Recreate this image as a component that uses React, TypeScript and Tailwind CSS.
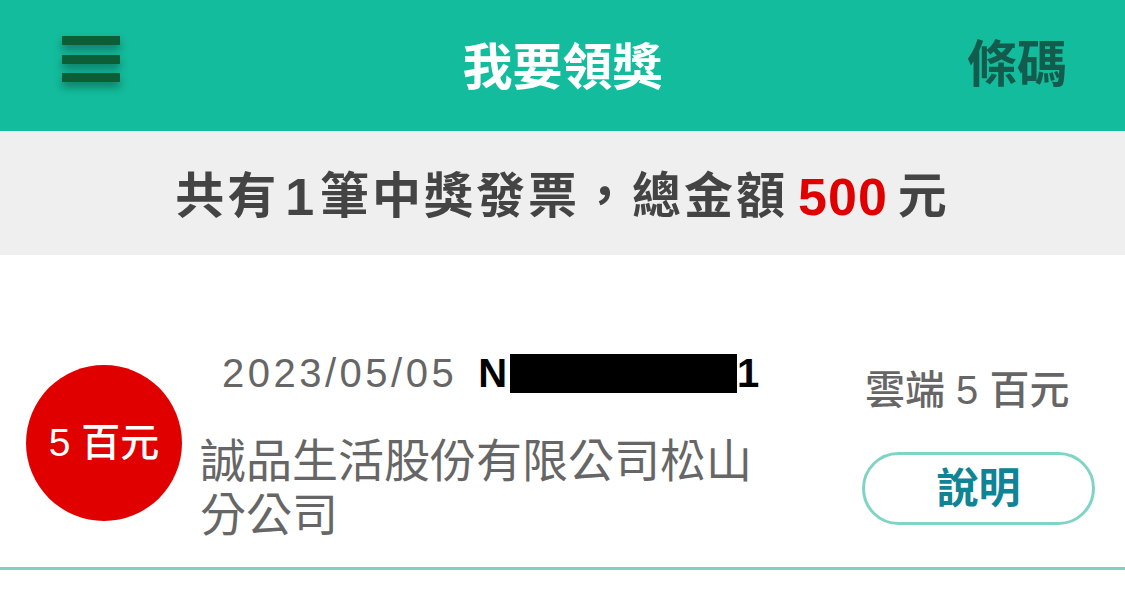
import React from "react";

const FONT = { fontFamily: '"Liberation Sans", "Noto Sans CJK TC", sans-serif' };

function MenuIcon() {
  return (
    <div className="self-start mt-[36px] flex flex-col gap-[9.5px] w-[58px] [filter:drop-shadow(0_5px_4px_rgba(0,0,0,0.35))]">
      <div className="h-[9px] bg-[#0b5e36]" />
      <div className="h-[9px] bg-[#0b5e36]" />
      <div className="h-[9px] bg-[#0b5e36]" />
    </div>
  );
}

function Header() {
  return (
    <header className="h-[131px] bg-[#13bc9c] flex items-center justify-between pl-[62px] pr-[58px] relative">
      <MenuIcon />
      <div className="absolute left-1/2 -translate-x-1/2 top-0 h-full pt-[6px] flex items-center text-white text-[50px] font-bold">
        我要領獎
      </div>
      <div className="text-[50px] font-bold text-[#135c4d]">條碼</div>
    </header>
  );
}

function Summary() {
  return (
    <div className="h-[124px] pt-[8px] bg-[#efefef] flex items-center justify-center text-[49px] font-bold text-[#444444] tracking-[3px]">
      <span>共有</span>
      <span className="mx-[6px] text-[52px] tracking-normal">1</span>
      <span>筆中獎發票，總金額</span>
      <span className="text-[#e00000] text-[52px] tracking-[1px] mx-[10px]">500</span>
      <span>元</span>
    </div>
  );
}

function PrizeRow() {
  return (
    <div className="h-[315px] flex items-start border-b-[3px] border-[#7fd0c4]">
      <div className="ml-[26px] mt-[110px] w-[156px] h-[156px] rounded-full bg-[#e00000] flex items-center justify-center text-white text-[39px] font-medium">
        5 百元
      </div>

      <div className="ml-[18px] mt-[94px] flex flex-col">
        <div className="ml-[22px] h-[48px] flex items-center text-[40px] tracking-[3.5px]">
          <span className="text-[#666666]">2023/05/05</span>
          <span className="ml-[21px] font-bold text-black tracking-normal">N</span>
          <span className="ml-[3px] w-[227px] h-[39px] bg-black" />
          <span className="font-bold text-black tracking-normal">1</span>
        </div>
        <div className="mt-[37px] w-[562px] text-[46px] leading-[54px] text-[#666666]">
          誠品生活股份有限公司松山分公司
        </div>
      </div>

      <div className="ml-auto mr-[30px] mt-[112px] flex flex-col items-start w-[233px]">
        <div className="ml-[3px] h-[46px] flex items-center text-[40px] font-medium text-[#666666] whitespace-pre">
          雲端 5 百元
        </div>
        <button className="mt-[39px] w-[233px] h-[73px] rounded-full border-[3px] border-[#80d4c6] flex items-center justify-center text-[42px] font-bold text-[#0e8494]">
          說明
        </button>
      </div>
    </div>
  );
}

export default function App() {
  return (
    <div className="w-[1125px] h-[594px] bg-white overflow-hidden" style={FONT}>
      <Header />
      <Summary />
      <PrizeRow />
    </div>
  );
}
